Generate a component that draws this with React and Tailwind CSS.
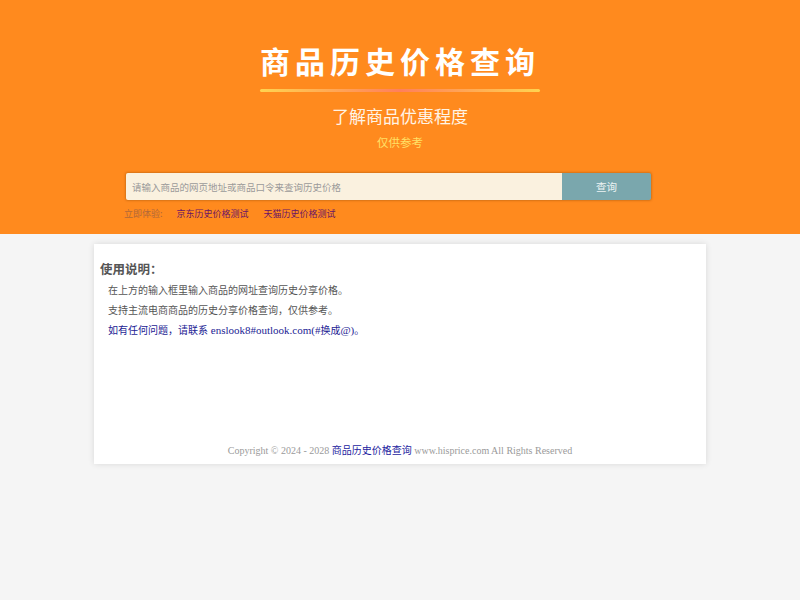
const SANS = 'font-["Noto_Sans_CJK_SC","Noto_Sans",sans-serif]';

export default function App() {
  return (
    <div className={`min-h-screen bg-[#f5f5f5] ${SANS}`}>
      {/* header */}
      <header className="h-[234px] bg-[#ff8a1e] pt-[38px] text-center">
        <div className="flex flex-col items-center">
          <h1 className="text-[30px] leading-[44px] font-bold tracking-[5px] text-white">
            商品历史价格查询
          </h1>
          <div className="mt-[7px] h-[3px] w-[280px] rounded-full bg-[linear-gradient(90deg,#ffd450,#ff7f5c_50%,#ffd450)]" />
          <p className="mt-[12px] text-[17px] leading-[24px] text-[#fff4e6]">了解商品优惠程度</p>
          <p className="mt-[6px] text-[11.5px] leading-[16px] text-[#ffe066]">仅供参考</p>
        </div>
        <div className="ml-[125px] mt-[22px] w-[527px] text-left">
          <form className="flex h-[29px] rounded-[3px] border border-[#e07818] shadow-[0_0_2px_rgba(160,80,0,0.4)] overflow-hidden">
            <input
              className="h-full flex-1 bg-[#faf1df] px-[6px] text-[9.5px] text-[#555] outline-none placeholder:text-[#9a9a9a]"
              placeholder="请输入商品的网页地址或商品口令来查询历史价格"
            />
            <button type="button" className="w-[89px] bg-[#7aa7ad] text-[10.5px] text-[#eef4f4]">
              查询
            </button>
          </form>
          <div className="mt-[6px] -ml-[1px] flex items-center text-[9px] leading-[14px]">
            <span className="text-[#b0683a]">立即体验:</span>
            <a className="ml-[14px] text-[#6a1466]">京东历史价格测试</a>
            <a className="ml-[15px] text-[#6a1466]">天猫历史价格测试</a>
          </div>
        </div>
      </header>

      {/* content card */}
      <main className="mx-auto mt-[10px] w-[612px] bg-white shadow-[0_0_6px_rgba(0,0,0,0.12)] px-[6px] pt-[16px] pb-[5px] font-['Liberation_Serif','Noto_Sans_CJK_SC',serif]">
        <h2 className={`text-[12.5px] leading-[18px] font-bold text-[#555] ${SANS}`}>使用说明：</h2>
        <div className="mt-[2px] pl-[8px] text-[10px] leading-[20px]">
          <p className={`text-[#555] ${SANS}`}>在上方的输入框里输入商品的网址查询历史分享价格。</p>
          <p className={`text-[#555] ${SANS}`}>支持主流电商商品的历史分享价格查询，仅供参考。</p>
          <p className="text-[#1c1c94] text-[11px]">
            <span className={`text-[10px] ${SANS}`}>如有任何问题，请联系</span> enslook8#outlook.com(#<span className="text-[10px]">换成</span>@)<span className="text-[10px]">。</span>
          </p>
        </div>
        <footer className="mt-[101px] text-center text-[10px] leading-[16px] text-[#9a9a9a]">
          Copyright © 2024 - 2028 <a className={`text-[#1c1ca0] ${SANS}`}>商品历史价格查询</a> www.hisprice.com All Rights Reserved
        </footer>
      </main>
    </div>
  );
}
